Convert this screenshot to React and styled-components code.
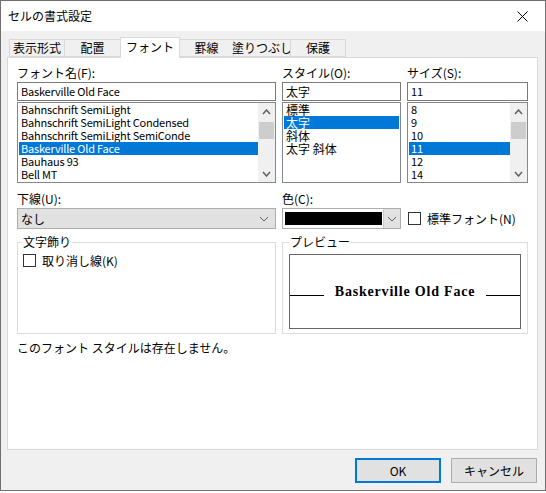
import React from 'react';
import styled, { createGlobalStyle } from 'styled-components';

const Global = createGlobalStyle`
  html, body { margin: 0; padding: 0; background: #ffffff; }
  body {
    font-family: "Noto Sans CJK JP", "Noto Sans", sans-serif;
    font-size: 12px;
    color: #000;
  }
  * { box-sizing: border-box; }
`;

const Window = styled.div`
  width: 546px;
  height: 491px;
  border: 1px solid #707070;
  background: #f0f0f0;
  display: flex;
  flex-direction: column;
`;

const TitleBar = styled.div`
  height: 30px;
  flex-shrink: 0;
  background: #ffffff;
  display: flex;
  align-items: center;
  padding-left: 7px;
`;

const Title = styled.div`
  flex: 1;
  font-size: 12px;
  line-height: 16px;
`;

const CloseBtn = styled.div`
  width: 46px;
  height: 30px;
  display: flex;
  align-items: center;
  justify-content: center;
`;

const Body = styled.div`
  flex: 1;
  display: flex;
  flex-direction: column;
  padding: 6px 7px 0 6px;
`;

const TabStrip = styled.div`
  height: 20px;
  display: flex;
  align-items: flex-end;
  padding-left: 2px;
  position: relative;
  z-index: 1;
`;

const Tab = styled.div`
  width: ${p => p.$w}px;
  height: ${p => (p.$active ? 21 : 18)}px;
  margin-bottom: ${p => (p.$active ? -1 : 0)}px;
  margin-left: ${p => (p.$first ? 0 : -1)}px;
  border: 1px solid #d9d9d9;
  border-bottom: ${p => (p.$active ? 'none' : '1px solid #d9d9d9')};
  background: ${p => (p.$active ? '#ffffff' : '#f0f0f0')};
  display: flex;
  align-items: center;
  justify-content: center;
  padding-bottom: ${p => (p.$active ? 2 : 0)}px;
  font-size: 12px;
  line-height: 14px;
  white-space: nowrap;
`;

const Panel = styled.div`
  height: 393px;
  flex-shrink: 0;
  background: #ffffff;
  border: 1px solid #d9d9d9;
  padding: 7px 9px 0 9px;
  display: flex;
  flex-direction: column;
`;

const ThreeCols = styled.div`
  display: grid;
  grid-template-columns: 259px 119px 121px;
  column-gap: 6px;
  margin-top: ${p => p.$mt || 0}px;
`;

const Col = styled.div`
  display: flex;
  flex-direction: column;
`;

const Label = styled.div`
  height: 15px;
  line-height: 15px;
  font-size: 12px;
  white-space: nowrap;
`;

const TextBox = styled.div`
  margin-top: 2px;
  height: 19px;
  border: 1px solid #7a7a7a;
  background: #fff;
  padding: 0 3px;
  line-height: 17px;
  white-space: nowrap;
  font-size: ${p => (p.$latin ? 11 : 12)}px;
  letter-spacing: ${p => (p.$latin ? -0.2 : 0)}px;
`;

const ListBox = styled.div`
  margin-top: 1px;
  height: 81px;
  border: 1px solid #828790;
  background: #fff;
  display: flex;
`;

const Items = styled.div`
  flex: 1;
  min-width: 0;
  padding: 0 ${p => (p.$scroll ? 0 : 1)}px 0 1px;
  display: flex;
  flex-direction: column;
  font-size: ${p => (p.$latin ? 11 : 12)}px;
  letter-spacing: ${p => (p.$latin ? -0.2 : 0)}px;
`;

const Item = styled.div`
  height: 13px;
  line-height: 13px;
  padding-left: 2px;
  white-space: nowrap;
  background: ${p => (p.$sel ? '#0078d7' : 'transparent')};
  color: ${p => (p.$sel ? '#ffffff' : '#000000')};
`;

const ScrollBar = styled.div`
  width: 17px;
  background: #f0f0f0;
  display: flex;
  flex-direction: column;
`;

const ScrollBtn = styled.div`
  height: 17px;
  display: flex;
  align-items: center;
  justify-content: center;
`;

const Track = styled.div`
  flex: 1;
  display: flex;
  flex-direction: column;
  align-items: center;
`;

const Thumb = styled.div`
  margin-top: 2px;
  width: 15px;
  height: 17px;
  background: #cdcdcd;
`;

const Dropdown = styled.div`
  margin-top: 2px;
  height: 21px;
  border: 1px solid #adadad;
  background: #e1e1e1;
  display: flex;
  align-items: center;
  justify-content: space-between;
  padding: 0 6px 0 3px;
  line-height: 15px;
`;

const ColorCombo = styled.div`
  margin-top: 2px;
  height: 21px;
  border: 1px solid #adadad;
  background: #ffffff;
  display: flex;
  padding: 0 0 0 2px;
`;

const Swatch = styled.div`
  flex: 1;
  margin: 3px 1px 3px 0;
  background: #000000;
`;

const ComboBtn = styled.div`
  width: 17px;
  background: #e1e1e1;
  border-left: 1px solid #cccccc;
  display: flex;
  align-items: center;
  justify-content: center;
`;

const CheckRow = styled.label`
  display: flex;
  align-items: center;
  gap: 6px;
  white-space: nowrap;
  line-height: 15px;
`;

const CheckInline = styled(CheckRow)`
  margin-top: 2px;
  height: 21px;
  padding-left: 1px;
`;

const Box = styled.span`
  width: 13px;
  height: 13px;
  border: 1px solid #333333;
  background: #ffffff;
  flex-shrink: 0;
`;

const TwoCols = styled.div`
  display: grid;
  grid-template-columns: 259px 246px;
  column-gap: 6px;
  margin-top: 6px;
`;

const Group = styled.fieldset`
  margin: 0;
  min-width: 0;
  height: 99px;
  border: 1px solid #dcdcdc;
  padding: 0 ${p => p.$pad}px;
`;

const Legend = styled.legend`
  padding: 0 1px;
  margin-left: ${p => p.$ml || 0}px;
  font-size: 12px;
  line-height: 14px;
`;

const GroupCheck = styled(CheckRow)`
  margin-top: 4px;
  height: 15px;
`;

const PreviewBox = styled.div`
  margin-top: 5px;
  height: 75px;
  border: 1px solid #646464;
  background: #fff;
  display: flex;
  align-items: center;
`;

const PreviewLine = styled.span`
  flex: 1;
  height: 1px;
  margin-top: 8px;
  background: #000;
`;

const PreviewText = styled.span`
  font-family: "Liberation Serif", "DejaVu Serif", serif;
  font-weight: bold;
  font-size: 14px;
  letter-spacing: 0.8px;
  margin: 0 11px;
  white-space: nowrap;
`;

const Message = styled.div`
  margin-top: 6px;
  line-height: 15px;
  white-space: nowrap;
`;

const Footer = styled.div`
  margin-top: 8px;
  display: flex;
  justify-content: flex-end;
  gap: 10px;
  padding-right: 1px;
`;

const Button = styled.div`
  width: 86px;
  height: 25px;
  background: #e1e1e1;
  border: ${p => (p.$primary ? '2px solid #0078d7' : '1px solid #adadad')};
  display: flex;
  align-items: center;
  justify-content: center;
  font-size: 12px;
  line-height: 15px;
`;

const Chevron = ({ up, w = 8, h = 4, color = '#606060', sw = 1 }) => (
  <svg width={w + 2} height={h + 2} viewBox={`-1 -1 ${w + 2} ${h + 2}`}>
    <polyline
      points={up ? `0,${h} ${w / 2},0 ${w},${h}` : `0,0 ${w / 2},${h} ${w},0`}
      fill="none"
      stroke={color}
      strokeWidth={sw}
    />
  </svg>
);

const Scroll = () => (
  <ScrollBar>
    <ScrollBtn><Chevron up w={7} h={4} sw={1.5} /></ScrollBtn>
    <Track><Thumb /></Track>
    <ScrollBtn><Chevron w={7} h={4} sw={1.5} /></ScrollBtn>
  </ScrollBar>
);

const tabs = [
  { t: '表示形式', w: 56 },
  { t: '配置', w: 57 },
  { t: 'フォント', w: 60, active: true },
  { t: '罫線', w: 55 },
  { t: '塗りつぶし', w: 58 },
  { t: '保護', w: 56 },
];

const fonts = [
  'Bahnschrift SemiLight',
  'Bahnschrift SemiLight Condensed',
  'Bahnschrift SemiLight SemiConde',
  'Baskerville Old Face',
  'Bauhaus 93',
  'Bell MT',
];
const styles = ['標準', '太字', '斜体', '太字 斜体'];
const sizes = ['8', '9', '10', '11', '12', '14'];

export default function App() {
  return (
    <>
      <Global />
      <Window>
        <TitleBar>
          <Title>セルの書式設定</Title>
          <CloseBtn>
            <svg width="11" height="11" viewBox="0 0 11 11">
              <path d="M0.5 0.5 L10.5 10.5 M10.5 0.5 L0.5 10.5" stroke="#000" strokeWidth="1" fill="none" />
            </svg>
          </CloseBtn>
        </TitleBar>
        <Body>
          <TabStrip>
            {tabs.map((t, i) => (
              <Tab key={t.t} $w={t.w} $active={t.active} $first={i === 0}>{t.t}</Tab>
            ))}
          </TabStrip>
          <Panel>
            <ThreeCols>
              <Col>
                <Label>フォント名(F):</Label>
                <TextBox $latin>Baskerville Old Face</TextBox>
                <ListBox>
                  <Items $scroll $latin>
                    {fonts.map(f => (
                      <Item key={f} $sel={f === 'Baskerville Old Face'}>{f}</Item>
                    ))}
                  </Items>
                  <Scroll />
                </ListBox>
              </Col>
              <Col>
                <Label>スタイル(O):</Label>
                <TextBox>太字</TextBox>
                <ListBox>
                  <Items>
                    {styles.map(s => (
                      <Item key={s} $sel={s === '太字'}>{s}</Item>
                    ))}
                  </Items>
                </ListBox>
              </Col>
              <Col>
                <Label>サイズ(S):</Label>
                <TextBox $latin>11</TextBox>
                <ListBox>
                  <Items $scroll $latin>
                    {sizes.map(s => (
                      <Item key={s} $sel={s === '11'}>{s}</Item>
                    ))}
                  </Items>
                  <Scroll />
                </ListBox>
              </Col>
            </ThreeCols>

            <ThreeCols $mt={8}>
              <Col>
                <Label>下線(U):</Label>
                <Dropdown>
                  <span>なし</span>
                  <Chevron w={8} h={4} />
                </Dropdown>
              </Col>
              <Col>
                <Label>色(C):</Label>
                <ColorCombo>
                  <Swatch />
                  <ComboBtn><Chevron w={8} h={4} /></ComboBtn>
                </ColorCombo>
              </Col>
              <Col>
                <Label>&nbsp;</Label>
                <CheckInline>
                  <Box />
                  <span>標準フォント(N)</span>
                </CheckInline>
              </Col>
            </ThreeCols>

            <TwoCols>
              <Group $pad={5}>
                <Legend $ml={-1}>文字飾り</Legend>
                <GroupCheck>
                  <Box />
                  <span>取り消し線(K)</span>
                </GroupCheck>
              </Group>
              <Group $pad={6}>
                <Legend>プレビュー</Legend>
                <PreviewBox>
                  <PreviewLine />
                  <PreviewText>Baskerville Old Face</PreviewText>
                  <PreviewLine />
                </PreviewBox>
              </Group>
            </TwoCols>

            <Message>このフォント スタイルは存在しません。</Message>
          </Panel>
          <Footer>
            <Button $primary>OK</Button>
            <Button>キャンセル</Button>
          </Footer>
        </Body>
      </Window>
    </>
  );
}
